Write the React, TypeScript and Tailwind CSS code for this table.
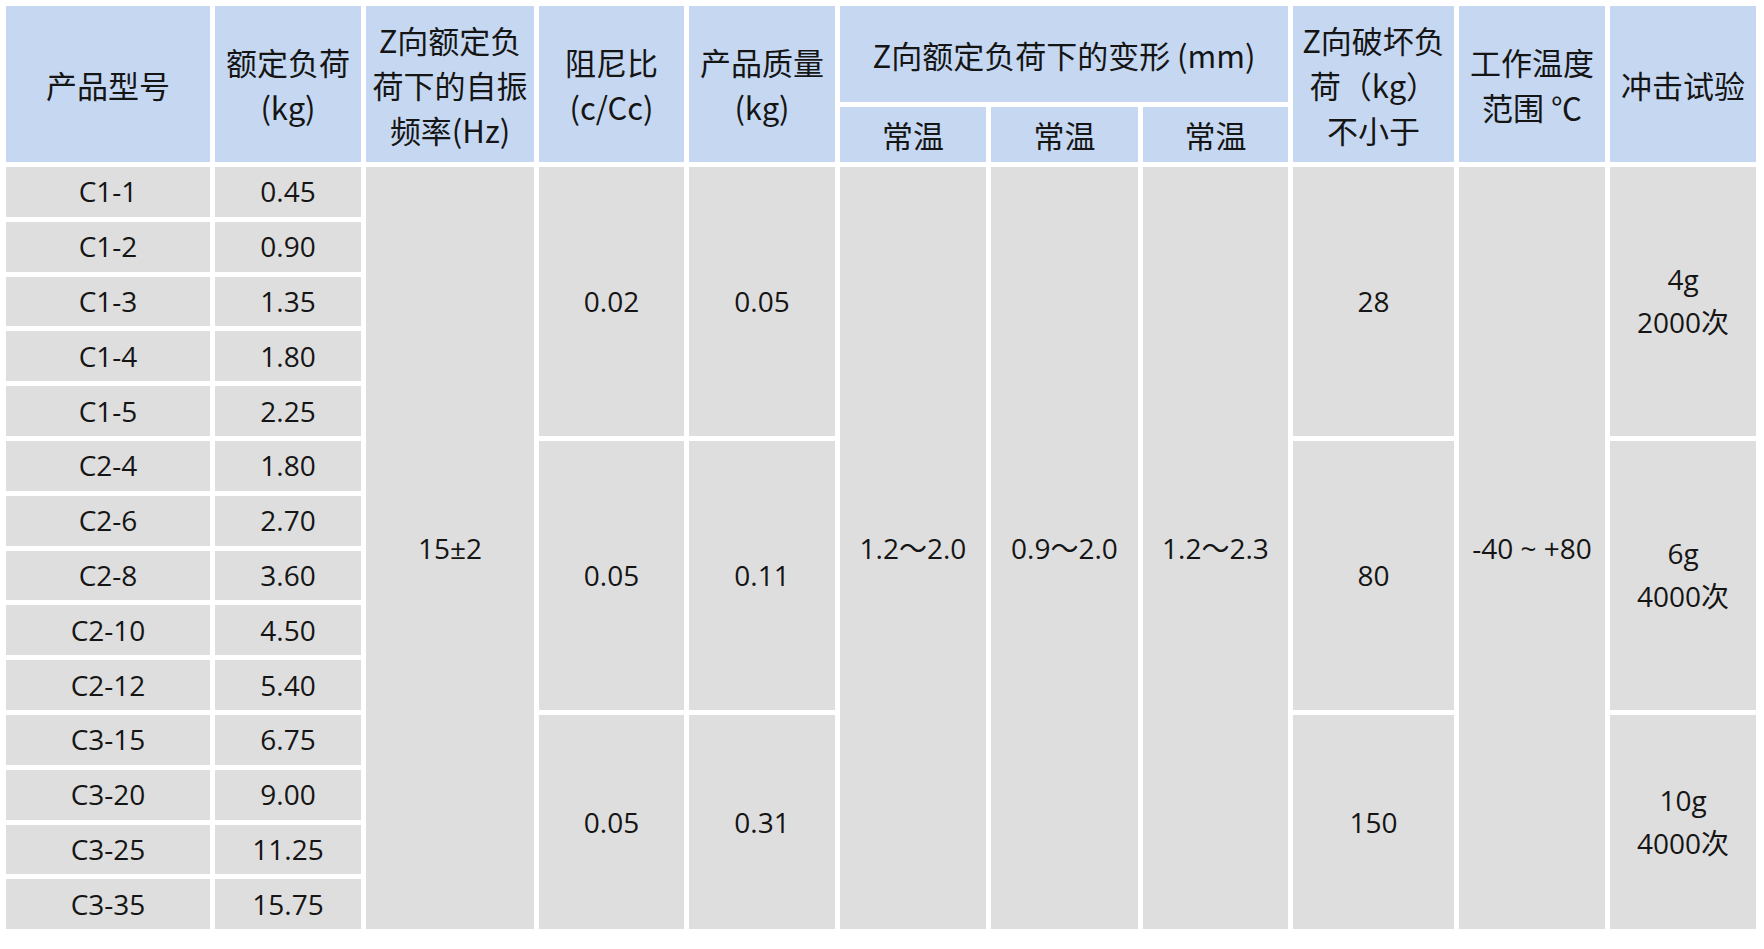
import React from "react";

// Head cells: light blue, body cells: light grey
const head = "bg-[#c6d8f1] flex items-center justify-center text-center text-[31px] leading-[45px] text-[#151515]";
const body = "bg-[#dedede] flex items-center justify-center text-center text-[28px] leading-[43px] text-[#151515]";
const cjk = { fontFamily: '"Noto Sans CJK SC", sans-serif' };

const models = [
  ["C1-1", "0.45"],
  ["C1-2", "0.90"],
  ["C1-3", "1.35"],
  ["C1-4", "1.80"],
  ["C1-5", "2.25"],
  ["C2-4", "1.80"],
  ["C2-6", "2.70"],
  ["C2-8", "3.60"],
  ["C2-10", "4.50"],
  ["C2-12", "5.40"],
  ["C3-15", "6.75"],
  ["C3-20", "9.00"],
  ["C3-25", "11.25"],
  ["C3-35", "15.75"],
];

function ModelRow({ name, load }: { name: string; load: string }) {
  return (
    <>
      <div className={body}>{name}</div>
      <div className={body}>{load}</div>
    </>
  );
}

export default function App() {
  return (
    <div
      className="w-[1764px] h-[949px] bg-white pt-[6px] pl-[6px]"
      style={{ fontFamily: '"Open Sans", "Noto Sans CJK SC", sans-serif' }}
    >
      <div className="grid grid-cols-[204px_146px_168px_145px_146px_146px_147px_145px_161px_146px_146px] grid-rows-[96px_55px_repeat(14,49.8px)] gap-[5px]">
        {/* header */}
        <div className={`${head} row-span-2`} style={cjk}>产品型号</div>
        <div className={`${head} row-span-2`} style={cjk}>
          额定负荷<br />(kg)
        </div>
        <div className={`${head} row-span-2`} style={cjk}>
          Z向额定负<br />荷下的自振<br />频率(Hz)
        </div>
        <div className={`${head} row-span-2`} style={cjk}>
          阻尼比<br />(c/Cc)
        </div>
        <div className={`${head} row-span-2`} style={cjk}>
          产品质量<br />(kg)
        </div>
        <div className={`${head} col-span-3`} style={cjk}>
          Z向额定负荷下的变形 (mm)
        </div>
        <div className={`${head} row-span-2`} style={cjk}>
          Z向破坏负<br />荷（kg）<br />不小于
        </div>
        <div className={`${head} row-span-2`} style={cjk}>
          工作温度<br />范围 ℃
        </div>
        <div className={`${head} row-span-2`} style={cjk}>冲击试验</div>
        <div className={head} style={cjk}>常温</div>
        <div className={head} style={cjk}>常温</div>
        <div className={head} style={cjk}>常温</div>

        {/* first row carries every merged cell that starts there */}
        <ModelRow name={models[0][0]} load={models[0][1]} />
        <div className={`${body} row-span-14`}>15±2</div>
        <div className={`${body} row-span-5`}>0.02</div>
        <div className={`${body} row-span-5`}>0.05</div>
        <div className={`${body} row-span-14`}>1.2～2.0</div>
        <div className={`${body} row-span-14`}>0.9～2.0</div>
        <div className={`${body} row-span-14`}>1.2～2.3</div>
        <div className={`${body} row-span-5`}>28</div>
        <div className={`${body} row-span-14`}>-40 ~ +80</div>
        <div className={`${body} row-span-5`}>
          4g<br />2000次
        </div>
        {models.slice(1, 5).map(([n, l]) => (
          <ModelRow key={n} name={n} load={l} />
        ))}

        {/* C2 group */}
        <ModelRow name={models[5][0]} load={models[5][1]} />
        <div className={`${body} row-span-5`}>0.05</div>
        <div className={`${body} row-span-5`}>0.11</div>
        <div className={`${body} row-span-5`}>80</div>
        <div className={`${body} row-span-5`}>
          6g<br />4000次
        </div>
        {models.slice(6, 10).map(([n, l]) => (
          <ModelRow key={n} name={n} load={l} />
        ))}

        {/* C3 group */}
        <ModelRow name={models[10][0]} load={models[10][1]} />
        <div className={`${body} row-span-4`}>0.05</div>
        <div className={`${body} row-span-4`}>0.31</div>
        <div className={`${body} row-span-4`}>150</div>
        <div className={`${body} row-span-4`}>
          10g<br />4000次
        </div>
        {models.slice(11).map(([n, l]) => (
          <ModelRow key={n} name={n} load={l} />
        ))}
      </div>
    </div>
  );
}
